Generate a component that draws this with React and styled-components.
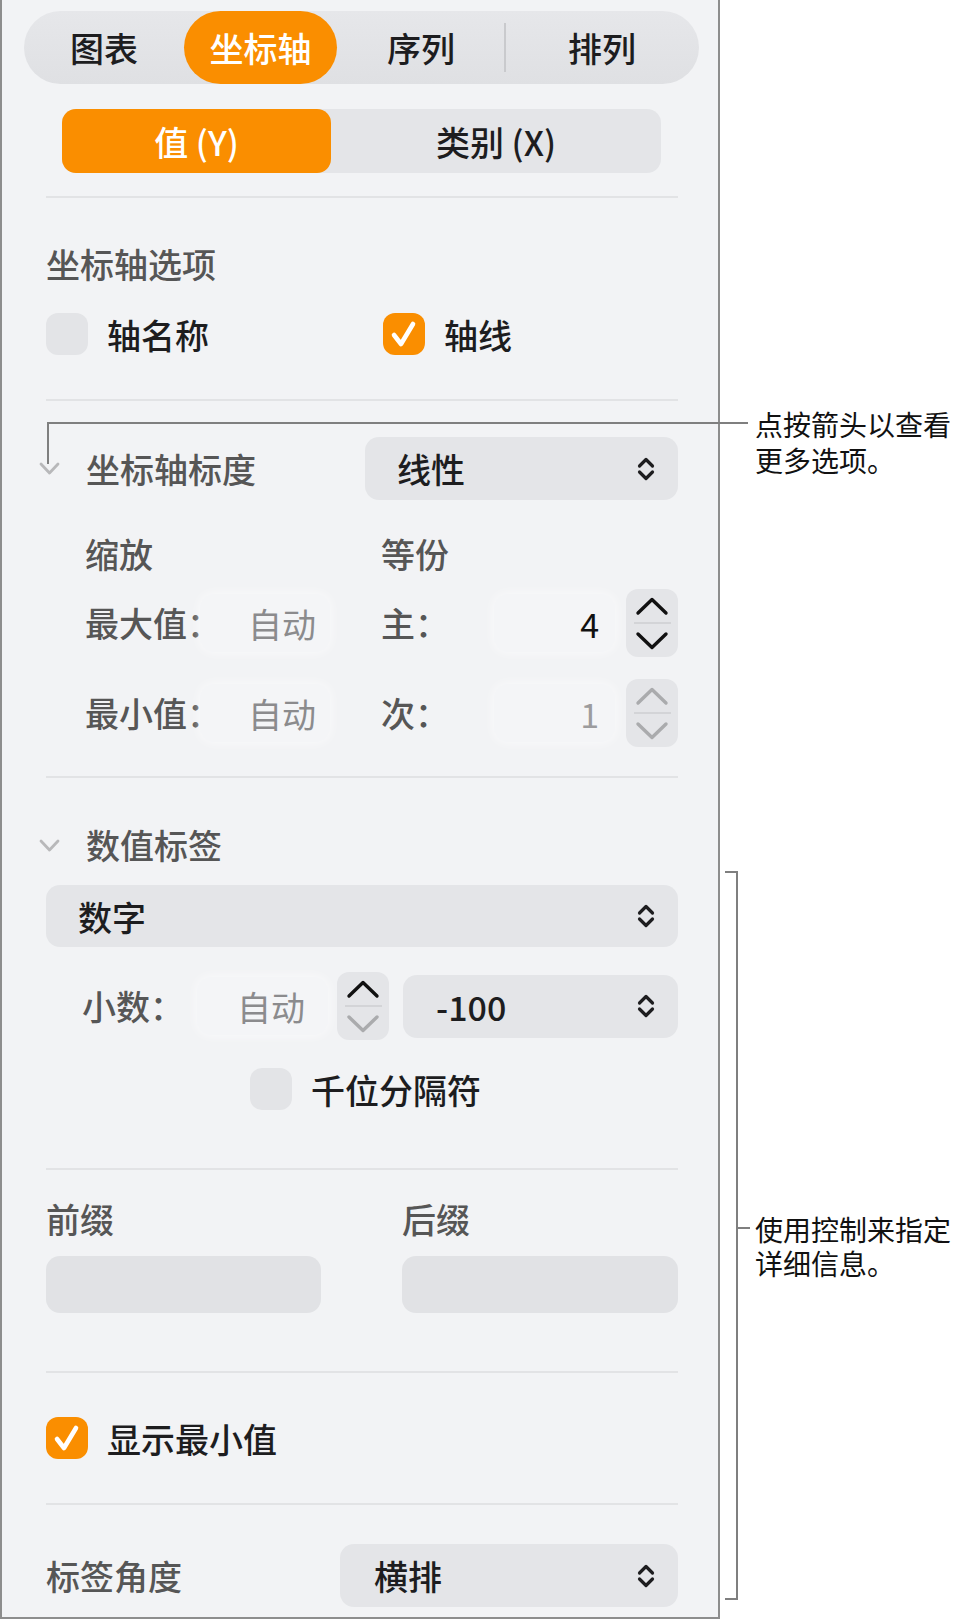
import React from 'react';
import styled, { createGlobalStyle } from 'styled-components';

const GlobalStyle = createGlobalStyle`
  html, body { margin: 0; padding: 0; background: #ffffff; }
  body {
    font-family: "Noto Sans CJK SC", "Noto Sans", sans-serif;
    -webkit-font-smoothing: antialiased;
  }
  * { box-sizing: border-box; }
`;

const Page = styled.div`
  position: relative;
  width: 963px;
  height: 1620px;
  display: flex;
  align-items: flex-start;
  overflow: hidden;
`;

const Panel = styled.div`
  width: 720px;
  height: 1619px;
  flex-shrink: 0;
  background: #f2f3f5;
  border-left: 2px solid #8d8d8d;
  border-right: 2px solid #8d8d8d;
  border-bottom: 2px solid #8d8d8d;
  display: flex;
  flex-direction: column;
  padding-top: 11px;
  font-size: 34px;
  font-weight: 500;
`;

const TabBar = styled.div`
  margin-left: 22px;
  width: 675px;
  height: 73px;
  border-radius: 37px;
  background: linear-gradient(#e6e7ea, #dfe0e3);
  display: flex;
  align-items: center;
`;

const Tab = styled.div`
  width: ${(p) => p.$w}px;
  height: 73px;
  flex-shrink: 0;
  display: flex;
  align-items: center;
  justify-content: center;
  border-radius: 37px;
  color: ${(p) => (p.$active ? '#ffffff' : '#1d1d1f')};
  background: ${(p) => (p.$active ? '#fa8e00' : 'transparent')};
`;

const TabSep = styled.div`
  width: 2px;
  height: 49px;
  margin: 0 -1px;
  background: #c9cacd;
`;

const Segmented = styled.div`
  margin: 25px 0 0 60px;
  width: 599px;
  height: 64px;
  border-radius: 14px;
  background: #e4e5e8;
  display: flex;
`;

const Seg = styled.div`
  width: ${(p) => p.$w}px;
  height: 64px;
  display: flex;
  align-items: center;
  justify-content: center;
  border-radius: 14px;
  color: ${(p) => (p.$active ? '#ffffff' : '#1d1d1f')};
  background: ${(p) => (p.$active ? '#fa8e00' : 'transparent')};
`;

const Divider = styled.div`
  margin: ${(p) => p.$mt}px 0 0 44px;
  width: 632px;
  height: 2px;
  flex-shrink: 0;
  background: #e2e3e5;
`;

const Row = styled.div`
  margin: ${(p) => p.$mt}px 0 0 ${(p) => 44 + (p.$indent || 0)}px;
  width: ${(p) => 632 - (p.$indent || 0)}px;
  height: ${(p) => p.$h}px;
  flex-shrink: 0;
  display: flex;
  align-items: center;
`;

const Title = styled.div`
  color: #565656;
  line-height: 40px;
  white-space: nowrap;
  width: ${(p) => (p.$w ? `${p.$w}px` : 'auto')};
  flex-shrink: 0;
`;

const ItemText = styled.div`
  color: #1d1d1f;
  white-space: nowrap;
`;

const CheckItem = styled.div`
  display: flex;
  align-items: center;
  gap: 19px;
  width: ${(p) => (p.$w ? `${p.$w}px` : 'auto')};
  flex-shrink: 0;
`;

const Box = styled.div`
  width: 42px;
  height: 42px;
  border-radius: 12px;
  flex-shrink: 0;
  background: ${(p) => (p.$on ? '#fa8e00' : '#e3e4e7')};
  display: flex;
  align-items: center;
  justify-content: center;
`;

const Disclosure = styled.div`
  display: flex;
  align-items: center;
  gap: 26px;
  margin-left: -7px;
`;

const Select = styled.div`
  width: ${(p) => p.$w}px;
  height: ${(p) => p.$h || 63}px;
  margin-left: ${(p) => (p.$auto ? 'auto' : '0')};
  flex-shrink: 0;
  border-radius: 14px;
  background: #e4e5e8;
  display: flex;
  align-items: center;
  justify-content: space-between;
  padding: 0 22px 0 ${(p) => p.$pl || 32}px;
  color: #1d1d1f;
`;

const Field = styled.div`
  width: ${(p) => p.$w}px;
  height: 58px;
  flex-shrink: 0;
  border-radius: 14px;
  background: #f4f5f7;
  box-shadow: 0 0 12px rgba(255, 255, 255, 0.7);
  display: flex;
  align-items: center;
  justify-content: flex-end;
  padding-right: ${(p) => p.$pr}px;
  color: ${(p) => p.$c};
  font-weight: 400;
`;

const Stepper = styled.div`
  width: 52px;
  height: 68px;
  flex-shrink: 0;
  margin-left: ${(p) => p.$ml}px;
  border-radius: 12px;
  background: #e4e5e8;
  display: flex;
  flex-direction: column;
  align-items: center;
`;

const StepBtn = styled.div`
  height: 33px;
  display: flex;
  align-items: center;
  justify-content: center;
  color: ${(p) => (p.$off ? '#aaabad' : '#111111')};
`;

const StepSep = styled.div`
  width: 37px;
  height: 2px;
  background: #d3d4d7;
`;

const Spacer = styled.div`
  width: ${(p) => p.$w}px;
  flex-shrink: 0;
`;

const AffixGrid = styled.div`
  margin: 29px 0 0 44px;
  width: 632px;
  display: grid;
  grid-template-columns: 275px 276px;
  column-gap: 81px;
`;

const AffixCol = styled.div`
  display: flex;
  flex-direction: column;
  gap: 17px;
`;

const AffixInput = styled.div`
  height: 57px;
  border-radius: 14px;
  background: #e1e2e5;
`;

const Note = styled.div`
  position: absolute;
  left: 755px;
  top: ${(p) => p.$top}px;
  font-size: 28px;
  line-height: ${(p) => p.$lh}px;
  font-weight: 400;
  color: #111111;
  white-space: nowrap;
`;

const Leader = styled.div`
  position: absolute;
  left: ${(p) => p.$x}px;
  top: ${(p) => p.$y}px;
  width: ${(p) => p.$w}px;
  height: ${(p) => p.$h}px;
  background: #7f7f7f;
`;

const Bracket = styled.div`
  position: absolute;
  left: 725px;
  top: 871px;
  width: 13px;
  height: 729px;
  border: 2px solid #7f7f7f;
  border-left: none;
`;

const UpDown = () => (
  <svg width="20" height="28" viewBox="0 0 20 28" fill="none" stroke="#1d1d1f" strokeWidth="3.2" strokeLinecap="round" strokeLinejoin="round">
    <polyline points="3.5,11 10,4.5 16.5,11" />
    <polyline points="3.5,17 10,23.5 16.5,17" />
  </svg>
);

const ChevUp = () => (
  <svg width="34" height="20" viewBox="0 0 34 20" fill="none" stroke="currentColor" strokeWidth="3.4" strokeLinecap="round" strokeLinejoin="round">
    <polyline points="3,17 17,3.5 31,17" />
  </svg>
);

const ChevDown = () => (
  <svg width="34" height="20" viewBox="0 0 34 20" fill="none" stroke="currentColor" strokeWidth="3.4" strokeLinecap="round" strokeLinejoin="round">
    <polyline points="3,3 17,16.5 31,3" />
  </svg>
);

const Disclose = () => (
  <svg width="21" height="13" viewBox="0 0 21 13" fill="none" stroke="#b8b8ba" strokeWidth="2.8" strokeLinecap="round" strokeLinejoin="round">
    <polyline points="2,2 10.5,11 19,2" />
  </svg>
);

const Check = () => (
  <svg width="42" height="42" viewBox="0 0 42 42" fill="none" stroke="#ffffff" strokeWidth="4.6" strokeLinecap="round" strokeLinejoin="round">
    <polyline points="11,22 18,31 30,11" />
  </svg>
);

const CheckBox = ({ on }) => <Box $on={on}>{on ? <Check /> : null}</Box>;

const StepControl = ({ ml, upOff, downOff }) => (
  <Stepper $ml={ml}>
    <StepBtn $off={upOff}><ChevUp /></StepBtn>
    <StepSep />
    <StepBtn $off={downOff}><ChevDown /></StepBtn>
  </Stepper>
);

export default function App() {
  return (
    <Page>
      <GlobalStyle />
      <Panel>
        <TabBar>
          <Tab $w={160}>图表</Tab>
          <Tab $w={153} $active>坐标轴</Tab>
          <Tab $w={168}>序列</Tab>
          <TabSep />
          <Tab $w={194}>排列</Tab>
        </TabBar>

        <Segmented>
          <Seg $w={269} $active>值 (Y)</Seg>
          <Seg $w={330}>类别 (X)</Seg>
        </Segmented>

        <Divider $mt={23} />

        <Row $mt={46} $h={40}>
          <Title>坐标轴选项</Title>
        </Row>
        <Row $mt={29} $h={42}>
          <CheckItem $w={337}>
            <CheckBox />
            <ItemText>轴名称</ItemText>
          </CheckItem>
          <CheckItem>
            <CheckBox on />
            <ItemText>轴线</ItemText>
          </CheckItem>
        </Row>

        <Divider $mt={44} />

        <Row $mt={36} $h={63}>
          <Disclosure>
            <Disclose />
            <Title>坐标轴标度</Title>
          </Disclosure>
          <Select $w={313} $auto>
            <span>线性</span>
            <UpDown />
          </Select>
        </Row>

        <Row $mt={34} $h={40} $indent={39}>
          <Title $w={296}>缩放</Title>
          <Title>等份</Title>
        </Row>
        <Row $mt={15} $h={68} $indent={39}>
          <Title $w={115}>最大值：</Title>
          <Field $w={130} $pr={14} $c="#8b8b8d">自动</Field>
          <Spacer $w={51} />
          <Title $w={113}>主：</Title>
          <Field $w={121} $pr={16} $c="#111111">4</Field>
          <StepControl ml={11} />
        </Row>
        <Row $mt={22} $h={68} $indent={39}>
          <Title $w={115}>最小值：</Title>
          <Field $w={130} $pr={14} $c="#8b8b8d">自动</Field>
          <Spacer $w={51} />
          <Title $w={113}>次：</Title>
          <Field $w={121} $pr={16} $c="#9c9c9e">1</Field>
          <StepControl ml={11} upOff downOff />
        </Row>

        <Divider $mt={29} />

        <Row $mt={47} $h={40}>
          <Disclosure>
            <Disclose />
            <Title>数值标签</Title>
          </Disclosure>
        </Row>
        <Row $mt={20} $h={62}>
          <Select $w={632} $h={62}>
            <span>数字</span>
            <UpDown />
          </Select>
        </Row>
        <Row $mt={25} $h={68} $indent={36}>
          <Title $w={115}>小数：</Title>
          <Field $w={131} $pr={23} $c="#8b8b8d">自动</Field>
          <StepControl ml={9} downOff />
          <Spacer $w={14} />
          <Select $w={275} $pl={33}>
            <span>-100</span>
            <UpDown />
          </Select>
        </Row>
        <Row $mt={28} $h={42} $indent={204}>
          <CheckItem>
            <CheckBox />
            <ItemText>千位分隔符</ItemText>
          </CheckItem>
        </Row>

        <Divider $mt={58} />

        <AffixGrid>
          <AffixCol>
            <Title>前缀</Title>
            <AffixInput />
          </AffixCol>
          <AffixCol>
            <Title>后缀</Title>
            <AffixInput />
          </AffixCol>
        </AffixGrid>

        <Divider $mt={58} />

        <Row $mt={44} $h={42}>
          <CheckItem>
            <CheckBox on />
            <ItemText>显示最小值</ItemText>
          </CheckItem>
        </Row>

        <Divider $mt={44} />

        <Row $mt={39} $h={63}>
          <Title>标签角度</Title>
          <Select $w={338} $auto $pl={34}>
            <span>横排</span>
            <UpDown />
          </Select>
        </Row>
      </Panel>

      <Leader $x={47} $y={422} $w={701} $h={2} />
      <Leader $x={47} $y={422} $w={2} $h={42} />
      <Note $top={406} $lh={36}>
        点按箭头以查看
        <br />
        更多选项。
      </Note>

      <Bracket />
      <Leader $x={736} $y={1227} $w={14} $h={2} />
      <Note $top={1212} $lh={34}>
        使用控制来指定
        <br />
        详细信息。
      </Note>
    </Page>
  );
}
